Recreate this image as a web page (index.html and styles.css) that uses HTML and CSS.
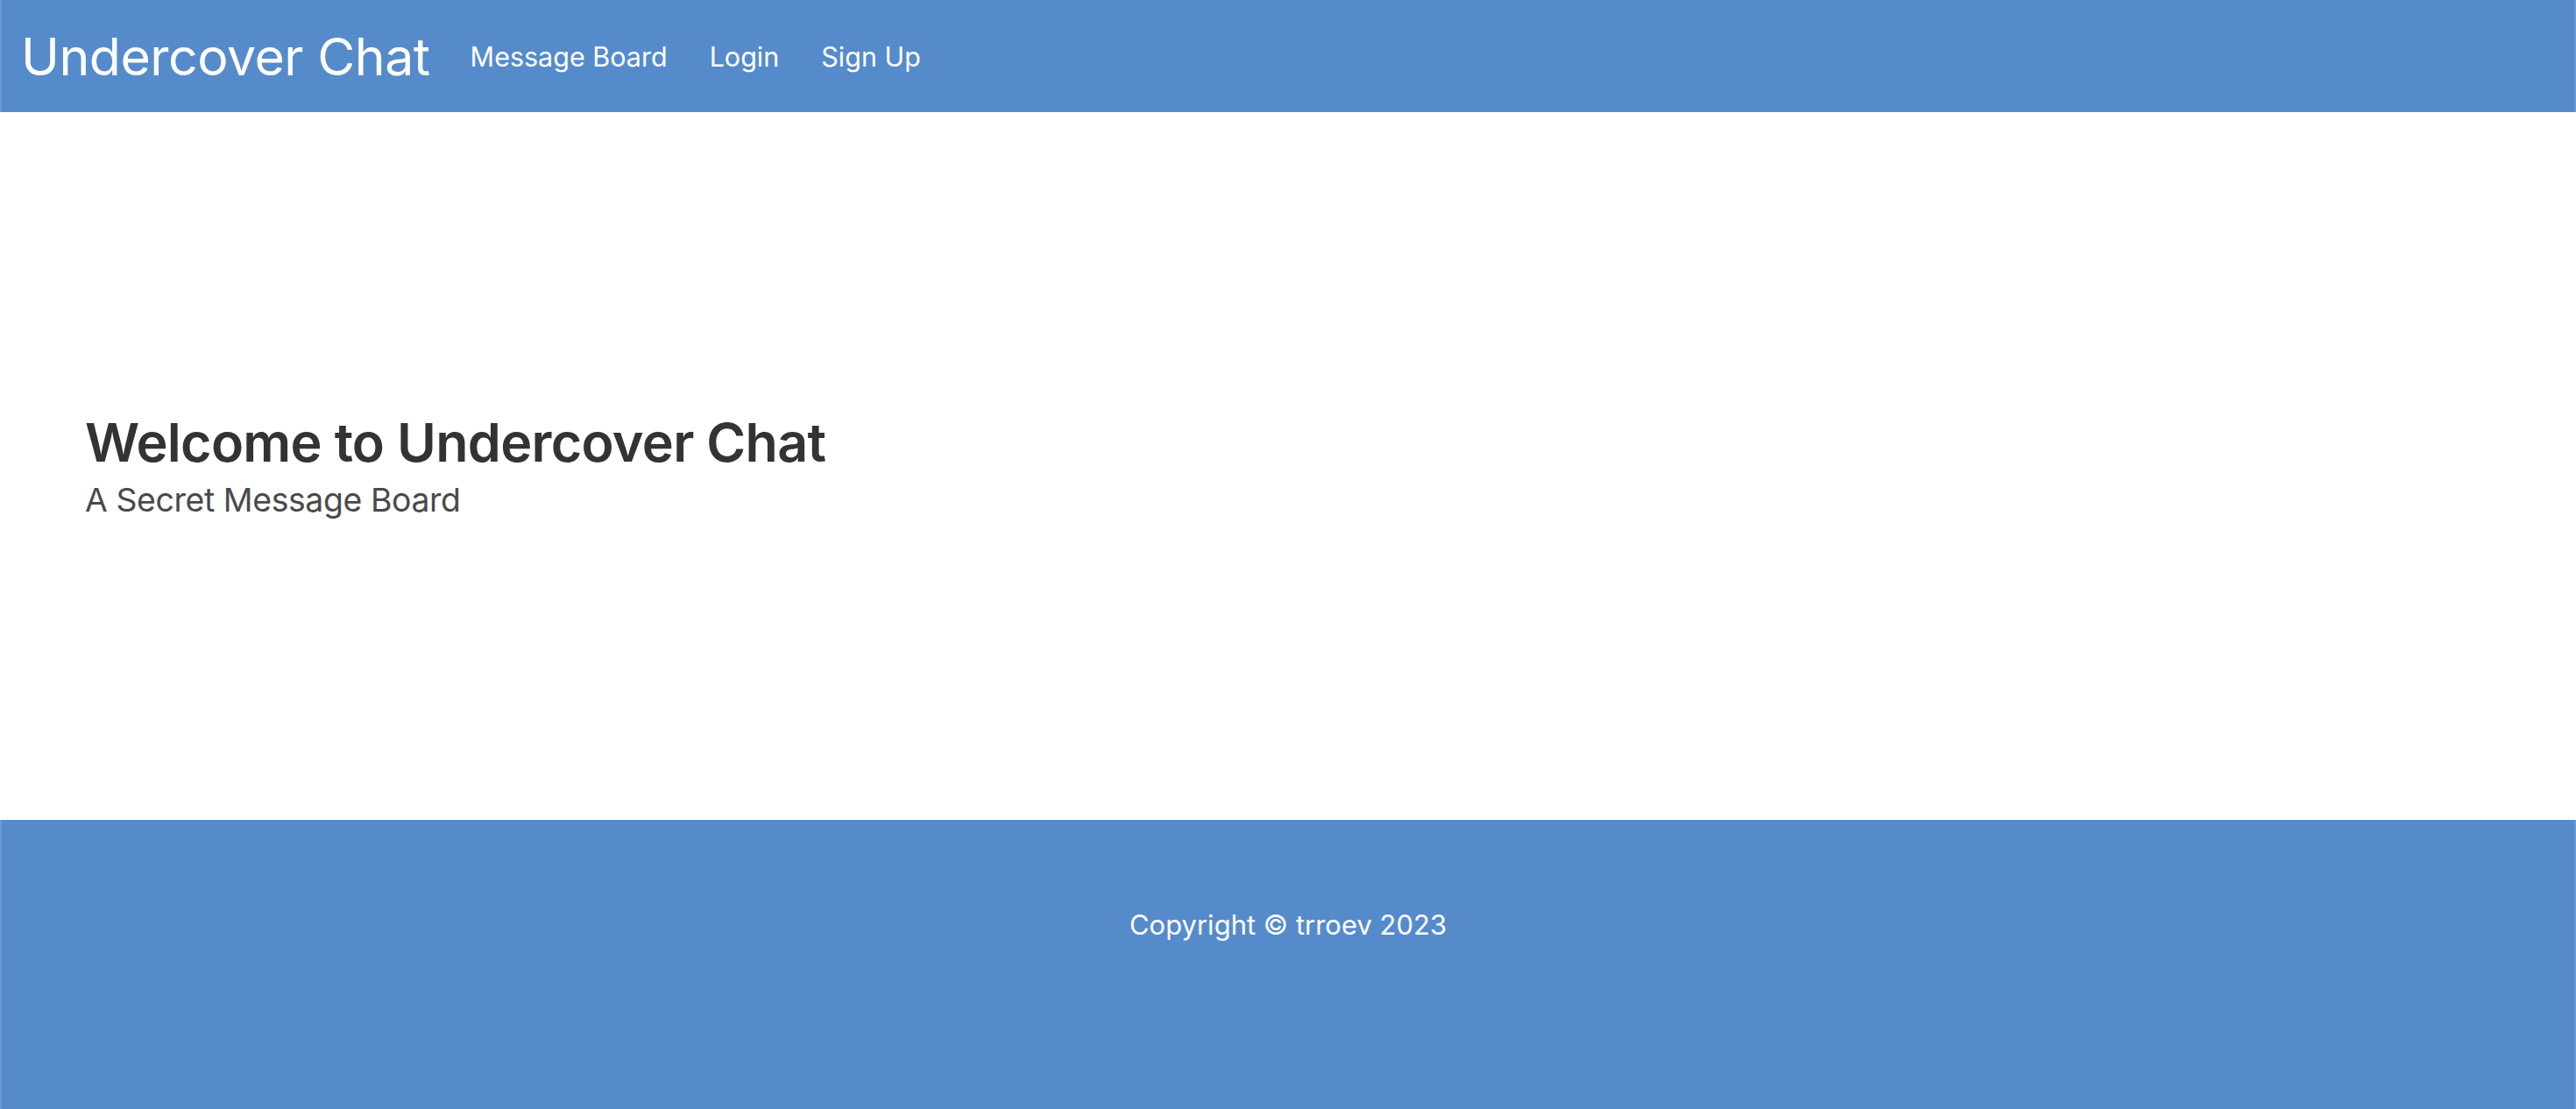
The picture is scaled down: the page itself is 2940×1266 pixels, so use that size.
FILE: index.html
```html
<!DOCTYPE html>
<html lang="en">
<head>
<meta charset="utf-8">
<title>Undercover Chat</title>
<link rel="stylesheet" href="styles.css">
</head>
<body>
<header class="navbar">
  <a class="brand" href="#">Undercover Chat</a>
  <nav class="nav">
    <a class="nav-link" href="#">Message Board</a>
    <a class="nav-link" href="#">Login</a>
    <a class="nav-link" href="#">Sign Up</a>
  </nav>
</header>
<main class="hero">
  <div class="hero-inner">
    <h1 class="hero-title">Welcome to Undercover Chat</h1>
    <p class="hero-sub">A Secret Message Board</p>
  </div>
</main>
<footer class="footer">
  <p class="copyright">Copyright © trroev 2023</p>
</footer>
</body>
</html>
```

FILE: styles.css
```css
html, body {
  margin: 0;
  padding: 0;
}
body {
  font-family: Inter, "Noto Sans", "Liberation Sans", sans-serif;
  background: #ffffff;
  color: #333333;
  height: 1266px;
  display: flex;
  flex-direction: column;
  overflow: hidden;
}
.navbar {
  height: 128px;
  flex: 0 0 128px;
  box-sizing: border-box;
  background: #558bcb;
  border-left: 2px solid #6b9bd3;
  border-right: 2px solid #6b9bd3;
  display: flex;
  align-items: center;
  padding-left: 22px;
}
.brand {
  color: #ffffff;
  text-decoration: none;
  font-size: 59px;
  font-weight: 400;
  letter-spacing: -0.5px;
  margin-right: 46px;
}
.nav {
  display: flex;
  gap: 48px;
}
.nav-link {
  color: #ffffff;
  text-decoration: none;
  font-size: 30.5px;
  font-weight: 400;
}
.hero {
  flex: 0 0 808px;
  display: flex;
  align-items: center;
  padding-left: 97px;
  box-sizing: border-box;
}
.hero-title {
  margin: 0;
  font-size: 61px;
  font-weight: 600;
  color: #333333;
  letter-spacing: -0.7px;
  line-height: 1.2;
}
.hero-sub {
  margin: 5px 0 0 0;
  font-size: 37.4px;
  font-weight: 400;
  color: #4a4a4a;
  letter-spacing: -0.4px;
  line-height: 1.3;
}
.footer {
  flex: 1 0 auto;
  background: #558bcb;
  border-left: 2px solid #6b9bd3;
  border-right: 2px solid #6b9bd3;
  display: flex;
  justify-content: center;
  padding-top: 101px;
  box-sizing: border-box;
}
.copyright {
  margin: 0;
  color: #ffffff;
  font-size: 31px;
  font-weight: 400;
}
```
